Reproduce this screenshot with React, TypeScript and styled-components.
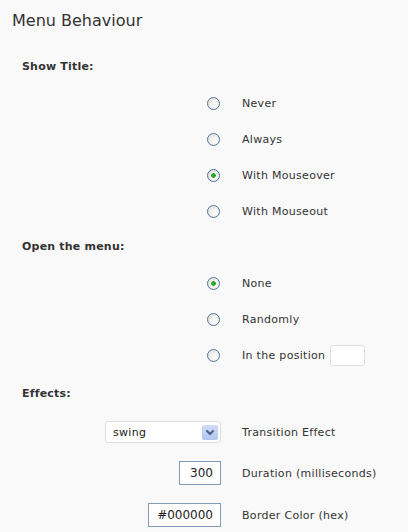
import styled, { createGlobalStyle } from 'styled-components';

const Global = createGlobalStyle`
  html, body {
    margin: 0;
    padding: 0;
    background: #f9f9f9;
  }
  body {
    font-family: "DejaVu Sans", Verdana, sans-serif;
    color: #333;
  }
`;

type Choice = { label: string; checked?: boolean; position?: boolean };

const showTitle: Choice[] = [
    { label: 'Never' },
    { label: 'Always' },
    { label: 'With Mouseover', checked: true },
    { label: 'With Mouseout' },
];

const openMenu: Choice[] = [
    { label: 'None', checked: true },
    { label: 'Randomly' },
    { label: 'In the position', position: true },
];

const App = () => {
    return (
        <>
        <Global />
        <Page>
            <Title>Menu Behaviour</Title>

            <Section>
                <Heading>Show Title:</Heading>
                {showTitle.map((c) => (
                    <Row key={c.label}>
                        <Control><Radio $checked={c.checked} /></Control>
                        <Label>{c.label}</Label>
                    </Row>
                ))}

                <Heading>Open the menu:</Heading>
                {openMenu.map((c) => (
                    <Row key={c.label}>
                        <Control><Radio $checked={c.checked} /></Control>
                        <Label>
                            {c.label}
                            {c.position && <PosInput />}
                        </Label>
                    </Row>
                ))}
            </Section>

            <Section $top={3}>
                <Heading>Effects:</Heading>
                <Row $h={40}>
                    <Control>
                        <Select>
                            <span>swing</span>
                            <Arrow width="16" height="15" viewBox="0 0 16 15">
                                <defs>
                                    <linearGradient id="ab" x1="0" y1="0" x2="0" y2="1">
                                        <stop offset="0" stopColor="#cfdcf8" />
                                        <stop offset="1" stopColor="#b3c6f1" />
                                    </linearGradient>
                                </defs>
                                <rect x="0" y="0" width="16" height="15" rx="2" fill="url(#ab)" />
                                <path d="M4.5 5.5 L8 9 L11.5 5.5" fill="none" stroke="#4d6185" strokeWidth="2" />
                            </Arrow>
                        </Select>
                    </Control>
                    <Label>Transition Effect</Label>
                </Row>
                <Row $h={42}>
                    <Control><TextBox $w={42}>300</TextBox></Control>
                    <Label>Duration (milliseconds)</Label>
                </Row>
                <Row $h={42}>
                    <Control><TextBox $w={73}>#000000</TextBox></Control>
                    <Label>Border Color (hex)</Label>
                </Row>
            </Section>
        </Page>
        </>
    );
};

export default App;

const Page = styled.div`
    width: 408px;
    height: 532px;
    overflow: hidden;
`;

const Title = styled.h2`
    margin: 0;
    padding-left: 12px;
    height: 42px;
    line-height: 42px;
    font-size: 16px;
    font-weight: normal;
    color: #333;
`;

const Section = styled.div<{ $top?: number }>`
    margin-top: ${(p) => p.$top ?? 7}px;
    display: flex;
    flex-direction: column;
`;

const Heading = styled.div`
    height: 36px;
    line-height: 36px;
    padding-left: 22px;
    font-size: 11px;
    font-weight: bold;
    letter-spacing: 0.2px;
    color: #333;
`;

const Row = styled.div<{ $h?: number }>`
    display: grid;
    grid-template-columns: 221px 1fr;
    column-gap: 21px;
    align-items: center;
    height: ${(p) => p.$h ?? 36}px;
`;

const Control = styled.div`
    display: flex;
    justify-content: flex-end;
    align-items: center;
`;

const Label = styled.div`
    display: flex;
    align-items: center;
    font-size: 11px;
    letter-spacing: 0.3px;
    color: #333;
`;

const Radio = styled.span<{ $checked?: boolean }>`
    box-sizing: border-box;
    width: 13px;
    height: 13px;
    margin-right: 1px;
    border-radius: 50%;
    border: 1px solid #4f74a3;
    background: ${(p) =>
        p.$checked
            ? 'radial-gradient(circle at 50% 50%, #2fb52f 0, #21a121 2px, transparent 2.6px), radial-gradient(circle at 65% 65%, #ffffff 0, #e6e6e0 70%, #d4d4cc 100%)'
            : 'radial-gradient(circle at 65% 65%, #ffffff 0, #e6e6e0 70%, #d4d4cc 100%)'};
`;

const PosInput = styled.span`
    box-sizing: border-box;
    display: inline-block;
    margin-left: 5px;
    width: 35px;
    height: 21px;
    background: #fff;
    border: 1px solid #dfdfdf;
    border-radius: 3px;
`;

const Select = styled.div`
    box-sizing: border-box;
    width: 116px;
    height: 22px;
    display: flex;
    align-items: center;
    justify-content: space-between;
    padding: 0 2px 0 7px;
    background: #fff;
    border: 1px solid #dfdfdf;
    border-radius: 3px;
    font-size: 11px;
    letter-spacing: 0.3px;
    color: #222;
`;

const Arrow = styled.svg`
    display: block;
`;

const TextBox = styled.div<{ $w: number }>`
    box-sizing: border-box;
    width: ${(p) => p.$w}px;
    height: 24px;
    line-height: 22px;
    padding: 0 7px;
    text-align: right;
    background: #fff;
    border: 1px solid #7f9db9;
    font-size: 12px;
    color: #222;
`;
